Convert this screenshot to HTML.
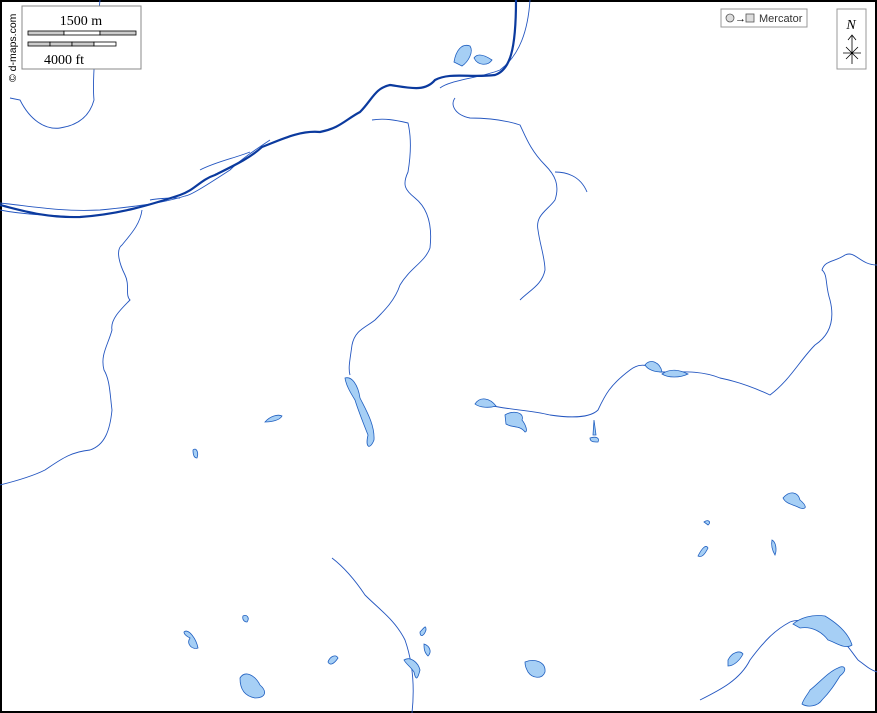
<!DOCTYPE html>
<html><head><style>
body{margin:0;background:#fff;}
svg{display:block;}
text{font-family:"Liberation Serif",serif;}
</style></head><body>
<svg width="877" height="713" viewBox="0 0 877 713" xmlns="http://www.w3.org/2000/svg">
<rect x="1" y="1" width="875" height="711" fill="#fff" stroke="#000" stroke-width="2"/>
<g fill="none" stroke="#2456c0" stroke-width="0.9">
<path d="M100,0 C96,40 92,80 94,100 C90,115 80,125 60,128 C45,130 30,120 20,100 L10,98"/>
<path d="M530,0 C528,30 520,55 500,70 C480,78 450,80 440,88"/>
<path d="M0,203 C30,206 60,212 100,210 C130,207 160,204 185,196"/>
<path d="M185,196 C190,196 210,183 230,170 C240,160 255,150 270,140"/>
<path d="M142,210 C140,225 130,235 122,245 C115,250 120,265 125,275 C130,285 125,295 130,300 C120,310 110,320 112,330 C108,345 100,355 104,370 C110,380 110,395 112,410 C110,430 105,445 90,450 C70,452 60,460 45,470 C35,475 20,480 0,485"/>
<path d="M372,120 C385,118 395,120 408,123 C412,140 410,160 408,172 C402,185 405,190 415,198 C430,210 432,230 430,248 C425,262 410,268 400,285 C395,300 385,310 375,320 C365,328 355,330 352,345 C350,360 348,368 350,375"/>
<path d="M455,98 C450,105 455,115 470,118 C490,118 505,120 520,125 C525,135 530,150 545,165 C555,175 560,185 555,200 C548,210 535,215 538,230 C540,245 545,258 545,270 C542,285 530,290 520,300"/>
<path d="M555,172 C565,172 580,175 587,192"/>
<path d="M488,405 C510,410 530,410 550,415 C570,418 590,418 598,410 C605,395 610,385 630,370 C640,362 650,365 660,372 C680,372 700,370 720,378 C740,382 755,388 770,395 C790,380 800,360 815,345 C830,335 835,320 830,300 C825,285 828,275 822,270 C825,260 835,262 845,255 C855,250 860,265 877,265"/>
<path d="M332,558 C345,568 355,580 365,595 C380,610 395,620 405,640 C412,660 415,685 412,713"/>
<path d="M700,700 C720,690 740,680 750,660 C765,640 775,630 790,622 C800,618 815,622 830,630 C845,640 850,650 858,660 C865,665 870,670 877,672"/>
<path d="M0,210 C20,214 40,215 80,217 M150,200 C160,198 170,198 180,198 M200,170 C215,162 235,158 250,152"/>
</g>
<path d="M0,205 C20,210 45,218 80,217 C120,214 150,205 180,195 C195,190 200,180 215,175 C235,165 250,158 262,147 C280,140 300,130 320,132 C340,128 345,120 360,112 C372,100 375,88 390,85 C410,88 425,92 435,80 C450,72 470,78 495,75 C510,70 516,50 516,0" fill="none" stroke="#0b3a9e" stroke-width="2.2"/>
<g fill="#a6cff5" stroke="#1f5fc0" stroke-width="0.8">
<path d="M454,62 C456,50 462,43 470,46 C474,52 468,62 462,66 Z"/><path d="M474,58 C478,52 486,56 492,60 C488,66 478,66 474,58Z"/>
<path d="M345,378 C352,376 358,385 360,398 C366,410 375,425 374,440 C370,450 365,448 368,435 C362,420 358,410 355,400 C350,392 346,385 345,378Z"/>
<path d="M265,422 C270,416 278,414 282,416 C280,420 272,422 265,422Z"/>
<path d="M193,450 C196,447 199,452 197,458 C194,458 193,454 193,450Z"/>
<path d="M475,404 C480,396 490,398 496,406 C490,408 480,408 475,404Z"/>
<path d="M505,415 C512,410 525,412 522,420 C526,425 528,432 525,432 C520,425 512,428 506,424Z"/>
<path d="M590,438 C596,436 600,438 598,442 C594,442 590,442 590,438Z M594,420 L596,435 L593,435Z"/>
<path d="M645,365 C650,358 660,362 662,372 C655,372 648,370 645,365Z"/><path d="M662,374 C670,368 680,370 688,374 C680,378 668,378 662,374Z"/>
<path d="M783,498 C790,490 798,492 800,500 C806,505 808,510 800,508 C792,504 786,504 783,498Z"/>
<path d="M704,522 C708,519 712,522 708,525Z"/><path d="M698,556 C702,548 706,544 708,548 C705,554 702,558 698,556Z"/>
<path d="M772,540 C776,542 777,550 775,555 C772,550 771,545 772,540Z"/>
<path d="M243,616 C247,614 250,618 247,622 C244,622 242,619 243,616Z"/>
<path d="M184,632 C188,628 196,638 198,648 C192,650 186,644 190,638 C186,636 184,634 184,632Z"/>
<path d="M328,662 C330,656 336,654 338,658 C334,664 330,666 328,662Z"/>
<path d="M240,678 C245,670 255,675 260,685 C268,692 265,698 255,698 C245,696 240,690 240,678Z"/>
<path d="M404,660 C410,656 418,662 420,670 C418,678 416,682 414,672 C410,666 406,664 404,660Z"/>
<path d="M420,632 C424,628 426,624 426,630 C424,636 420,638 420,632Z M424,644 C430,646 432,652 428,656 C424,652 424,648 424,644Z"/>
<path d="M525,662 C535,658 546,662 545,672 C542,680 532,678 528,672 C526,668 525,666 525,662Z"/>
<path d="M728,660 C732,652 740,650 743,654 C740,660 734,666 728,666Z"/>
<path d="M793,624 C800,618 812,614 825,616 C835,622 848,632 852,645 C845,650 835,642 828,640 C822,632 812,626 800,628 Z"/>
<path d="M810,690 C818,684 828,672 838,668 C845,664 848,670 840,676 C835,684 830,692 822,700 C818,706 808,708 802,704 C804,698 808,694 810,690Z"/>
</g>
<rect x="22" y="6" width="119" height="63" fill="#fff" stroke="#888" stroke-width="1"/>
<text x="81" y="25" font-size="14" text-anchor="middle">1500 m</text>
<g stroke="#000" stroke-width="0.8"><rect x="28" y="31" width="36" height="4" fill="#ccc"/><rect x="64" y="31" width="36" height="4" fill="#fff"/><rect x="100" y="31" width="36" height="4" fill="#ccc"/>
<rect x="28" y="42" width="22" height="4" fill="#ccc"/><rect x="50" y="42" width="22" height="4" fill="#ccc"/><rect x="72" y="42" width="22" height="4" fill="#ccc"/><rect x="94" y="42" width="22" height="4" fill="#fff"/></g>
<text x="64" y="64" font-size="14" text-anchor="middle">4000 ft</text>
<text transform="translate(16,82) rotate(-90)" font-size="10.5" font-family="Liberation Sans,sans-serif" style="font-family:'Liberation Sans',sans-serif">© d-maps.com</text>
<rect x="721" y="9" width="86" height="18" fill="#fff" stroke="#999"/>
<circle cx="730" cy="18" r="4" fill="#ddd" stroke="#555" stroke-width="0.8"/>
<text x="735" y="22" font-size="11" style="font-family:'Liberation Sans',sans-serif">→</text>
<rect x="746" y="14" width="8" height="8" fill="#ddd" stroke="#555" stroke-width="0.8"/>
<text x="759" y="22" font-size="11" style="font-family:'Liberation Sans',sans-serif" fill="#333">Mercator</text>
<rect x="837" y="9" width="29" height="60" fill="#fff" stroke="#999"/>
<text x="851" y="29" font-size="14" font-style="italic" text-anchor="middle">N</text>
<g stroke="#000" stroke-width="0.8" fill="none"><path d="M852,36 L852,64 M848,40 L852,35 L856,40 M843,53 L861,53 M846,47 L858,59 M858,47 L846,59"/></g>
</svg>
</body></html>
